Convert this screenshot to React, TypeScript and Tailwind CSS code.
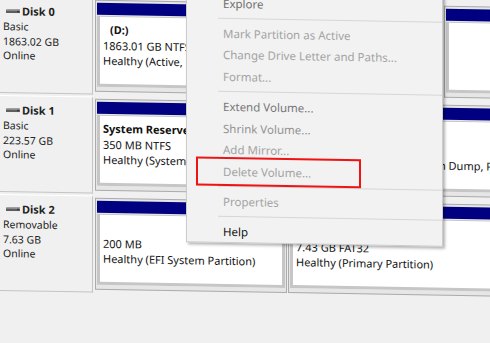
import React from "react";

function DiskIcon() {
  return (
    <svg width="14" height="4" viewBox="0 0 14 4" className="shrink-0">
      <rect x="0" y="0" width="14" height="4" fill="#5e5e5e" />
      <rect x="0" y="0" width="14" height="1.3" fill="#a9a9a9" />
      <rect x="11" y="1.5" width="2" height="1.5" fill="#3a3a3a" />
    </svg>
  );
}

function DiskLabel({ name, type, size }: { name: string; type: string; size: string }) {
  return (
    <div className="w-[93px] h-[97px] shrink-0 bg-[#f0f0f0] border-t border-r border-b border-t-white border-r-[#c4c4c4] border-b-[#c4c4c4] pl-[3px] pt-[7px] text-[10.5px] leading-[14.8px] text-[#222222]">
      <div className="flex items-center font-bold text-[11px]">
        <span className="ml-[3px] mr-[2px] flex items-center">
          <DiskIcon />
        </span>
        {name}
      </div>
      <div>{type}</div>
      <div>{size}</div>
      <div>Online</div>
    </div>
  );
}

function Partition({
  className,
  lines,
  indentFirst,
}: {
  className: string;
  lines: [string, string, string];
  indentFirst?: boolean;
}) {
  return (
    <div
      className={
        "shrink-0 mt-[2px] h-[92px] flex flex-col border border-[#ababab] bg-[#e6e6e6] px-[1px] pt-[2px] pb-[4px] " +
        className
      }
    >
      <div className="h-[12px] shrink-0 bg-[#000080]" />
      <div className="mt-[1px] flex-1 min-h-0 bg-white border-l-[3px] border-r-[3px] border-b-[3px] border-t border-[#c6c6c6] pl-[3px] pt-[5px] text-[11px] leading-[15.5px] text-[#111111] whitespace-nowrap overflow-hidden">
        <div className={"font-bold " + (indentFirst ? "pl-[7px]" : "")}>{lines[0] || "\u00a0"}</div>
        <div>{lines[1]}</div>
        <div>{lines[2]}</div>
      </div>
    </div>
  );
}

function MenuItem({ label, color }: { label: string; color: string }) {
  return (
    <div className={"h-[21.75px] flex items-center pl-[36px] text-[11.5px] " + color}>{label}</div>
  );
}

function Sep() {
  return (
    <div className="h-[8px] flex items-center pl-[31px]">
      <div className="h-px w-full bg-[#d6d6d6]" />
    </div>
  );
}

export default function App() {
  return (
    <div className="w-[490px] h-[343px] overflow-hidden bg-[#f0f0f0] font-['Noto_Sans',sans-serif]">
      <div className="relative origin-top-left skew-y-1">
        <div className="-mt-[4px] flex flex-col gap-[2px]">
          <div className="flex gap-[2px] h-[97px]">
            <DiskLabel name="Disk 0" type="Basic" size="1863.02 GB" />
            <div className="flex gap-[1px]">
              <Partition
                className="w-[348px]"
                indentFirst
                lines={["(D:)", "1863.01 GB NTFS", "Healthy (Active, Primary Partition)"]}
              />
              <Partition className="w-[220px]" lines={["", "", ""]} />
            </div>
          </div>
          <div className="flex gap-[2px] h-[97px]">
            <DiskLabel name="Disk 1" type="Basic" size="223.57 GB" />
            <div className="flex gap-[1px]">
              <Partition
                className="w-[184px]"
                lines={["System Reserved", "350 MB NTFS", "Healthy (System, Active, Primary Partition)"]}
              />
              <Partition
                className="w-[420px]"
                lines={["(C:)", "223.22 GB NTFS", "Healthy (Boot, Page File, Crash Dump, Primary Partition)"]}
              />
            </div>
          </div>
          <div className="flex gap-[2px] h-[97px]">
            <DiskLabel name="Disk 2" type="Removable" size="7.63 GB" />
            <div className="flex gap-[1px]">
              <Partition
                className="w-[192px]"
                lines={["", "200 MB", "Healthy (EFI System Partition)"]}
              />
              <Partition
                className="w-[420px]"
                lines={["", "7.43 GB FAT32", "Healthy (Primary Partition)"]}
              />
            </div>
          </div>
        </div>

        <div className="absolute left-[186px] top-[-9.3px] w-[257px] bg-[#f2f2f2] border border-[#cccccc] pt-[1px] pb-[0px] shadow-[2px_2px_3px_rgba(0,0,0,0.3)]">
          <MenuItem label="Explore" color="text-[#6f6f6f]" />
          <Sep />
          <MenuItem label="Mark Partition as Active" color="text-[#a3a3a3]" />
          <MenuItem label="Change Drive Letter and Paths..." color="text-[#a3a3a3]" />
          <MenuItem label="Format..." color="text-[#a3a3a3]" />
          <Sep />
          <MenuItem label="Extend Volume..." color="text-[#777777]" />
          <MenuItem label="Shrink Volume..." color="text-[#939393]" />
          <MenuItem label="Add Mirror..." color="text-[#a3a3a3]" />
          <MenuItem label="Delete Volume..." color="text-[#a3a3a3]" />
          <Sep />
          <MenuItem label="Properties" color="text-[#a3a3a3]" />
          <Sep />
          <MenuItem label="Help" color="text-[#141414]" />
          <div className="absolute left-[9px] top-[165.3px] w-[165px] h-[29px] border-2 border-[#ee1414]" />
        </div>
      </div>
    </div>
  );
}
